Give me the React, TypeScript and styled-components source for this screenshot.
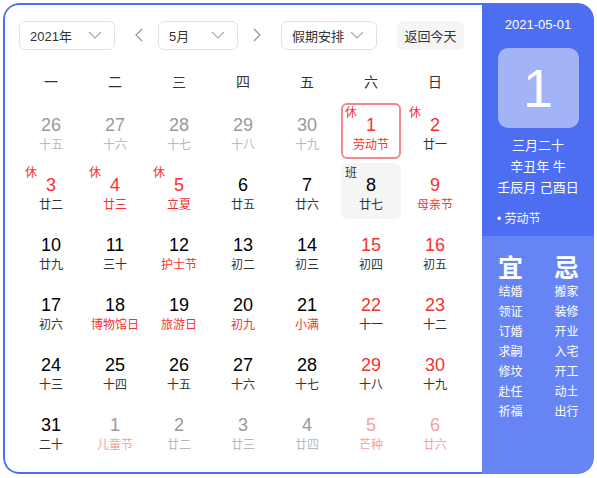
import React from "react";
import styled, {createGlobalStyle} from "styled-components";

const GlobalStyle = createGlobalStyle`
  html, body {
    margin: 0;
    padding: 0;
    background: #fff;
    font-family: "Liberation Sans", "Noto Sans CJK SC", sans-serif;
  }
`;

const RED = "#f73131";
const LIGHT_RED = "#f5a3a3";

type Tone = "normal" | "red" | "grey" | "lightRed";

interface IDay {
  num: number;
  lunar: string;
  numTone: Tone;
  lunarTone: Tone;
  tag?: "休" | "班";
  selected?: boolean;
  work?: boolean;
}

const toneColor = (t: Tone, lunar = false) => {
  switch (t) {
    case "red":
      return RED;
    case "grey":
      return lunar ? "#b8b8b8" : "#999";
    case "lightRed":
      return LIGHT_RED;
    default:
      return lunar ? "#333" : "#000";
  }
};

const d = (num: number, lunar: string, numTone: Tone = "normal", lunarTone: Tone = "normal", extra: Partial<IDay> = {}): IDay =>
  ({num, lunar, numTone, lunarTone, ...extra});

const rows: IDay[][] = [
  [
    d(26, "十五", "grey", "grey"), d(27, "十六", "grey", "grey"), d(28, "十七", "grey", "grey"),
    d(29, "十八", "grey", "grey"), d(30, "十九", "grey", "grey"),
    d(1, "劳动节", "red", "red", {tag: "休", selected: true}), d(2, "廿一", "red", "normal", {tag: "休"}),
  ],
  [
    d(3, "廿二", "red", "normal", {tag: "休"}), d(4, "廿三", "red", "red", {tag: "休"}), d(5, "立夏", "red", "red", {tag: "休"}),
    d(6, "廿五"), d(7, "廿六"), d(8, "廿七", "normal", "normal", {tag: "班", work: true}), d(9, "母亲节", "red", "red"),
  ],
  [
    d(10, "廿九"), d(11, "三十"), d(12, "护士节", "normal", "red"), d(13, "初二"), d(14, "初三"),
    d(15, "初四", "red"), d(16, "初五", "red"),
  ],
  [
    d(17, "初六"), d(18, "博物馆日", "normal", "red"), d(19, "旅游日", "normal", "red"), d(20, "初九", "normal", "red"),
    d(21, "小满", "normal", "red"), d(22, "十一", "red"), d(23, "十二", "red"),
  ],
  [
    d(24, "十三"), d(25, "十四"), d(26, "十五"), d(27, "十六"), d(28, "十七"), d(29, "十八", "red"), d(30, "十九", "red"),
  ],
  [
    d(31, "二十"), d(1, "儿童节", "grey", "lightRed"), d(2, "廿二", "grey", "grey"), d(3, "廿三", "grey", "grey"),
    d(4, "廿四", "grey", "grey"), d(5, "芒种", "lightRed", "lightRed"), d(6, "廿六", "lightRed", "lightRed"),
  ],
];

const weekdays = ["一", "二", "三", "四", "五", "六", "日"];
const yi = ["结婚", "领证", "订婚", "求嗣", "修坟", "赴任", "祈福"];
const ji = ["搬家", "装修", "开业", "入宅", "开工", "动土", "出行"];

const Page = styled.div`
  padding: 3px;
`;

const Frame = styled.div`
  display: flex;
  width: 591px;
  height: 471px;
  border-radius: 16px;
  overflow: hidden;
`;

const Main = styled.div`
  box-sizing: border-box;
  width: 479px;
  border: 2px solid #4e6ef2;
  border-right: none;
  border-radius: 16px 0 0 16px;
  padding: 16px 0 0 14px;
`;

const Toolbar = styled.div`
  display: flex;
  align-items: center;
  height: 28px;
`;

const Select = styled.div<{ $w: number; $ml?: number }>`
  box-sizing: border-box;
  display: flex;
  align-items: center;
  justify-content: space-between;
  width: ${p => p.$w}px;
  height: 29px;
  margin-left: ${p => p.$ml ?? 0}px;
  padding: 0 12px 0 10px;
  border: 1px solid #e2e2e2;
  border-radius: 6px;
  font-size: 13px;
  color: #333;
`;

const NavArrow = styled.div<{ $ml: number }>`
  display: flex;
  margin-left: ${p => p.$ml}px;
`;

const TodayButton = styled.div`
  display: flex;
  align-items: center;
  justify-content: center;
  width: 67px;
  height: 29px;
  margin-left: 20px;
  border-radius: 6px;
  background: #f5f5f6;
  font-size: 13px;
  color: #333;
`;

const Grid = styled.div`
  display: grid;
  grid-template-columns: repeat(7, 60px);
  column-gap: 4px;
  row-gap: 4px;
  margin-left: 2px;
`;

const WeekRow = styled(Grid)`
  margin-top: 21px;
  margin-bottom: 9px;
`;

const WeekDay = styled.div`
  height: 24px;
  line-height: 24px;
  text-align: center;
  font-size: 14px;
  color: #333;
`;

const Cell = styled.div<{ $selected?: boolean; $work?: boolean }>`
  position: relative;
  box-sizing: border-box;
  height: 56px;
  display: flex;
  flex-direction: column;
  align-items: center;
  padding-top: 9px;
  border-radius: 6px;
  border: 2px solid ${p => (p.$selected ? "#ef8b8f" : "transparent")};
  background: ${p => (p.$work ? "#f5f5f6" : "transparent")};
`;

const Num = styled.div<{ $tone: Tone }>`
  font-size: 18px;
  line-height: 22px;
  color: ${p => toneColor(p.$tone)};
`;

const Lunar = styled.div<{ $tone: Tone }>`
  font-size: 12px;
  line-height: 16px;
  margin-top: 1px;
  white-space: nowrap;
  color: ${p => toneColor(p.$tone, true)};
`;

const Tag = styled.span<{ $work?: boolean }>`
  position: absolute;
  left: 2px;
  top: 0px;
  font-size: 12px;
  line-height: 16px;
  color: ${p => (p.$work ? "#333" : RED)};
`;

const Side = styled.div`
  flex: 1;
  display: flex;
  flex-direction: column;
  color: #fff;
  border-radius: 0 16px 16px 0;
  overflow: hidden;
`;

const SideTop = styled.div`
  height: 233px;
  background: #4e6ef2;
  display: flex;
  flex-direction: column;
  align-items: center;
  padding-top: 14px;
  box-sizing: border-box;
`;

const DateLine = styled.div`
  font-size: 13px;
  line-height: 16px;
`;

const BigDay = styled.div`
  width: 81px;
  height: 80px;
  margin-top: 15px;
  border-radius: 10px;
  background: #a2b3f8;
  display: flex;
  align-items: center;
  justify-content: center;
  font-size: 54px;
  line-height: 1;
`;

const LunarInfo = styled.div`
  margin-top: 7px;
  font-size: 13px;
  line-height: 21px;
  text-align: center;
`;

const Festival = styled.div`
  align-self: flex-start;
  margin: 13px 0 0 15px;
  font-size: 12px;
  line-height: 16px;
`;

const SideBottom = styled.div`
  flex: 1;
  background: #6784f4;
  display: flex;
  justify-content: space-between;
  padding: 18px 15px 0 16px;
`;

const Column = styled.div`
  display: flex;
  flex-direction: column;
  align-items: center;
`;

const BigWord = styled.div`
  font-size: 25px;
  line-height: 28px;
  font-weight: bold;
  margin-bottom: 0;
`;

const Item = styled.div`
  font-size: 12px;
  line-height: 20px;
`;

const ChevronDown = () => (
  <svg width="14" height="8" viewBox="0 0 14 8" fill="none">
    <polyline points="1,1 7,7 13,1" stroke="#aaa" strokeWidth="1.2"/>
  </svg>
);

const Chevron = ({dir}: { dir: "left" | "right" }) => (
  <svg width="8" height="14" viewBox="0 0 8 14" fill="none">
    <polyline points={dir === "left" ? "7,1 1,7 7,13" : "1,1 7,7 1,13"} stroke="#999" strokeWidth="1.3"/>
  </svg>
);

export default function App() {
  return (
    <Page>
      <GlobalStyle/>
      <Frame>
        <Main>
          <Toolbar>
            <Select $w={96}>2021年<ChevronDown/></Select>
            <NavArrow $ml={20}><Chevron dir="left"/></NavArrow>
            <Select $w={80} $ml={15}>5月<ChevronDown/></Select>
            <NavArrow $ml={15}><Chevron dir="right"/></NavArrow>
            <Select $w={96} $ml={20}>假期安排<ChevronDown/></Select>
            <TodayButton>返回今天</TodayButton>
          </Toolbar>
          <WeekRow>
            {weekdays.map(w => <WeekDay key={w}>{w}</WeekDay>)}
          </WeekRow>
          <Grid>
            {rows.flat().map((day, i) => (
              <Cell key={i} $selected={day.selected} $work={day.work}>
                {day.tag && <Tag $work={day.tag === "班"}>{day.tag}</Tag>}
                <Num $tone={day.numTone}>{day.num}</Num>
                <Lunar $tone={day.lunarTone}>{day.lunar}</Lunar>
              </Cell>
            ))}
          </Grid>
        </Main>
        <Side>
          <SideTop>
            <DateLine>2021-05-01</DateLine>
            <BigDay>1</BigDay>
            <LunarInfo>
              <div>三月二十</div>
              <div>辛丑年 牛</div>
              <div>壬辰月 己酉日</div>
            </LunarInfo>
            <Festival>• 劳动节</Festival>
          </SideTop>
          <SideBottom>
            <Column>
              <BigWord>宜</BigWord>
              {yi.map(t => <Item key={t}>{t}</Item>)}
            </Column>
            <Column>
              <BigWord>忌</BigWord>
              {ji.map(t => <Item key={t}>{t}</Item>)}
            </Column>
          </SideBottom>
        </Side>
      </Frame>
    </Page>
  );
}
